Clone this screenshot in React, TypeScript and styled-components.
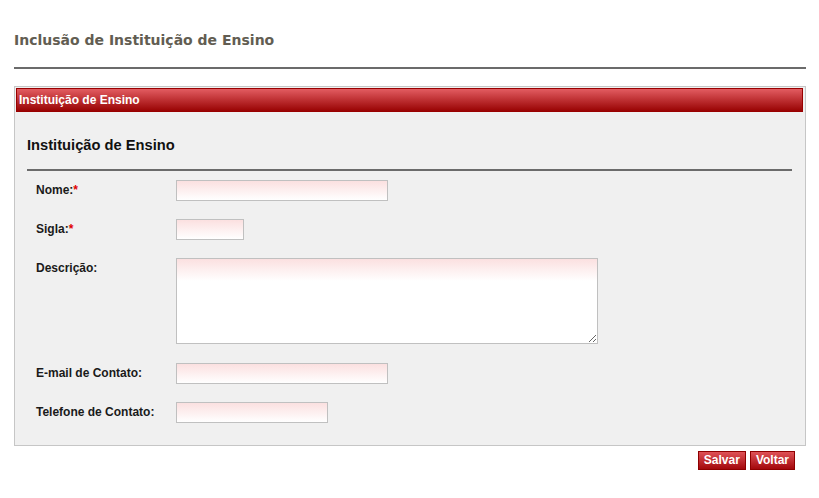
import React from 'react';
import styled, { createGlobalStyle } from 'styled-components';

const GlobalStyle = createGlobalStyle`
    body {
        margin: 0;
        background: #ffffff;
        font-family: "Liberation Sans", Arial, sans-serif;
    }
`;

const Page = styled.div`
    padding: 31px 13px 0 14px;
`;

const PageTitle = styled.h1`
    margin: 0;
    font-family: "DejaVu Sans", Verdana, sans-serif;
    font-size: 14px;
    line-height: 18px;
    font-weight: bold;
    color: #625d52;
`;

const Rule = styled.div<{ $top: number }>`
    height: 2px;
    background: #6b6b6b;
    margin-top: ${(p) => p.$top}px;
`;

const Panel = styled.div`
    margin-top: 17px;
    border: 1px solid #c6c6c6;
    background: #f0f0f0;
    padding: 1px 2px 22px 1px;
`;

const PanelHeader = styled.div`
    height: 22px;
    border: 1px solid #990000;
    background: linear-gradient(#e25c61, #990303);
    color: #ffffff;
    font-size: 12px;
    font-weight: bold;
    line-height: 22px;
    padding-left: 2px;
`;

const PanelBody = styled.div`
    padding: 0 11px 0 11px;
`;

const SectionTitle = styled.h2`
    margin: 25px 0 0;
    font-size: 14.7px;
    line-height: 16px;
    font-weight: bold;
    color: #111111;
`;

const FormGrid = styled.div`
    display: grid;
    grid-template-columns: 140px 1fr;
    row-gap: 18px;
    padding: 9px 0 0 9px;
    align-items: start;
`;

const Label = styled.label`
    font-size: 12px;
    font-weight: bold;
    line-height: 21px;
    color: #1a1a1a;
`;

const Required = styled.span`
    color: #e00000;
`;

const TextInput = styled.input<{ $width: number }>`
    box-sizing: border-box;
    width: ${(p) => p.$width}px;
    height: 21px;
    margin: 0;
    border: 1px solid #c0c0c0;
    background: linear-gradient(#fbe0e0, #ffffff);
    font: 12px "Liberation Sans", Arial, sans-serif;
    outline: none;
`;

const TextArea = styled.textarea`
    box-sizing: border-box;
    display: block;
    width: 422px;
    height: 86px;
    margin: 0 0 1px;
    border: 1px solid #c0c0c0;
    background: linear-gradient(#fbe0e0, #ffffff 22px);
    font: 12px "Liberation Sans", Arial, sans-serif;
    outline: none;
`;

const Actions = styled.div`
    display: flex;
    justify-content: flex-end;
    gap: 4px;
    padding: 5px 11px 0 0;
`;

const Button = styled.button`
    height: 19px;
    padding: 0 5px;
    border: 1px solid #8e0000;
    background: linear-gradient(#de5156, #a3080c);
    color: #ffffff;
    font: bold 12px "Liberation Sans", Arial, sans-serif;
    line-height: 17px;
    cursor: pointer;
`;

export default function App() {
    return (
        <>
            <GlobalStyle />
            <Page>
                <PageTitle>Inclusão de Instituição de Ensino</PageTitle>
                <Rule $top={18} />
                <Panel>
                    <PanelHeader>Instituição de Ensino</PanelHeader>
                    <PanelBody>
                        <SectionTitle>Instituição de Ensino</SectionTitle>
                        <Rule $top={16} />
                        <FormGrid>
                            <Label>
                                Nome:<Required>*</Required>
                            </Label>
                            <TextInput $width={212} />
                            <Label>
                                Sigla:<Required>*</Required>
                            </Label>
                            <TextInput $width={68} />
                            <Label>Descrição:</Label>
                            <TextArea />
                            <Label>E-mail de Contato:</Label>
                            <TextInput $width={212} />
                            <Label>Telefone de Contato:</Label>
                            <TextInput $width={152} />
                        </FormGrid>
                    </PanelBody>
                </Panel>
                <Actions>
                    <Button>Salvar</Button>
                    <Button>Voltar</Button>
                </Actions>
            </Page>
        </>
    );
}
